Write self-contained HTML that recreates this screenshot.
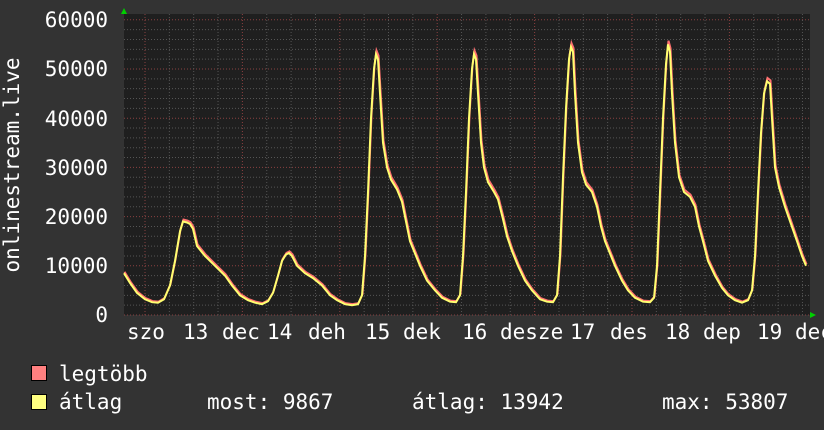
<!DOCTYPE html>
<html><head><meta charset="utf-8"><style>
html,body{margin:0;padding:0;background:#333;}
svg{display:block}
text{font-family:"DejaVu Sans Mono","Liberation Mono",monospace;fill:#fff;font-size:21px}
</style></head><body>
<svg width="824" height="430" viewBox="0 0 824 430" xmlns="http://www.w3.org/2000/svg">
<rect x="0" y="0" width="824" height="430" fill="#333"/>
<rect x="124" y="14" width="686" height="301" fill="#1f1f1f"/>
<g id="grid"></g>
<g id="lines"></g>
<polygon points="121,14 127,14 124,8" fill="#00d000"/>
<polygon points="810,312 810,318 816,315" fill="#00d000"/>
<g text-anchor="end">
<text x="108" y="27">60000</text>
<text x="108" y="76">50000</text>
<text x="108" y="126">40000</text>
<text x="108" y="175">30000</text>
<text x="108" y="224">20000</text>
<text x="108" y="273">10000</text>
<text x="108" y="322">0</text>
</g>
<text transform="translate(19,165) rotate(-90)" text-anchor="middle">onlinestream.live</text>
<g>
<text x="127" y="339">szo</text><text x="183" y="339">13</text><text x="222" y="339">dec</text>
<text x="267" y="339">14</text><text x="308" y="339">deh</text>
<text x="365" y="339">15</text><text x="403" y="339">dek</text>
<text x="462" y="339">16</text><text x="500" y="339">desze</text>
<text x="570" y="339">17</text><text x="610" y="339">des</text>
<text x="665" y="339">18</text><text x="703" y="339">dep</text>
<text x="757" y="339">19</text><text x="795" y="339">dec</text>
</g>
<rect x="31.5" y="365.5" width="15" height="15" fill="#ff8080" stroke="#000"/>
<rect x="31.5" y="394.5" width="15" height="15" fill="#ffff80" stroke="#000"/>
<text x="59" y="381">legtöbb</text>
<text x="59" y="409">átlag</text>
<text x="207" y="409">most: 9867</text>
<text x="412" y="409">átlag: 13942</text>
<text x="662" y="409">max: 53807</text>
</svg>
<script>
var g=document.getElementById("grid"),h="";
for(var v=0;v<=60000;v+=2000){var y=315-v*0.00492;var maj=v%10000==0;
h+='<line x1="124" x2="810" y1="'+y+'" y2="'+y+'" stroke="'+(maj?'#8a4040':'#555')+'" stroke-width="1" stroke-dasharray="1,2"/>';}
for(var i=-1;i<30;i++){var x=145+i*24.35;if(x<124||x>810)continue;var maj=((i%4)+4)%4==0;
h+='<line y1="14" y2="315" x1="'+x+'" x2="'+x+'" stroke="'+(maj?'#8a4040':'#555')+'" stroke-width="1" stroke-dasharray="1,2"/>';}
g.innerHTML=h;
var P=[[124,8500],[130,6500],[137,4500],[145,3200],[152,2600],[158,2500],[164,3200],[170,6000],[175,11000],[180,17000],[183,19000],[187,18800],[190,18500],[193,17500],[197,14000],[205,12000],[215,10000],[225,8000],[232,6000],[240,4000],[248,3000],[255,2500],[262,2200],[268,2800],[273,4500],[278,8000],[282,11000],[286,12300],[289,12600],[292,12000],[297,10000],[305,8500],[313,7500],[322,6000],[330,4000],[337,3000],[345,2200],[352,2000],[358,2200],[362,4000],[365,12000],[368,25000],[371,40000],[374,50000],[376,53000],[378,52000],[380,45000],[383,35000],[387,30000],[391,27500],[397,25500],[402,23000],[406,19000],[410,15000],[415,12500],[420,10000],[427,7000],[435,5000],[442,3500],[450,2700],[456,2600],[460,4000],[463,12000],[466,25000],[469,40000],[472,50000],[474,53000],[476,52000],[478,45000],[481,35000],[484,30000],[488,27000],[494,25000],[498,23500],[503,19500],[507,16000],[512,13000],[518,10000],[525,7000],[532,5000],[540,3200],[547,2700],[553,2600],[557,4000],[560,12000],[563,28000],[566,42000],[569,52000],[571,54500],[573,53500],[575,45000],[578,35000],[582,29000],[586,26500],[592,25000],[597,22000],[601,18000],[605,15000],[610,12500],[615,10000],[622,7000],[628,5000],[635,3500],[643,2700],[650,2600],[654,3500],[657,10000],[660,25000],[663,40000],[666,51000],[668,55000],[670,53500],[672,45000],[675,35000],[679,28000],[684,25000],[690,24000],[695,22000],[699,18000],[703,15000],[708,11000],[715,8000],[722,5500],[728,4000],[735,3000],[742,2500],[748,3000],[752,5000],[755,12000],[758,25000],[761,37000],[764,45000],[767,47500],[770,47000],[772,40000],[775,30000],[779,26000],[785,22000],[791,18500],[797,15000],[802,12000],[806,10000]];
function path(dy,dx,scale){return P.map(function(p,i){return (i?"L":"M")+(p[0]+dx)+","+(315-p[1]*0.00492*scale+dy).toFixed(1)}).join("");}
document.getElementById("lines").innerHTML=
'<path d="'+path(-1,0.5,1.01)+'" fill="none" stroke="#ff7070" stroke-width="2"/>'+
'<path d="'+path(0,0,1)+'" fill="none" stroke="#ffff70" stroke-width="2"/>';
</script>
</body></html>
